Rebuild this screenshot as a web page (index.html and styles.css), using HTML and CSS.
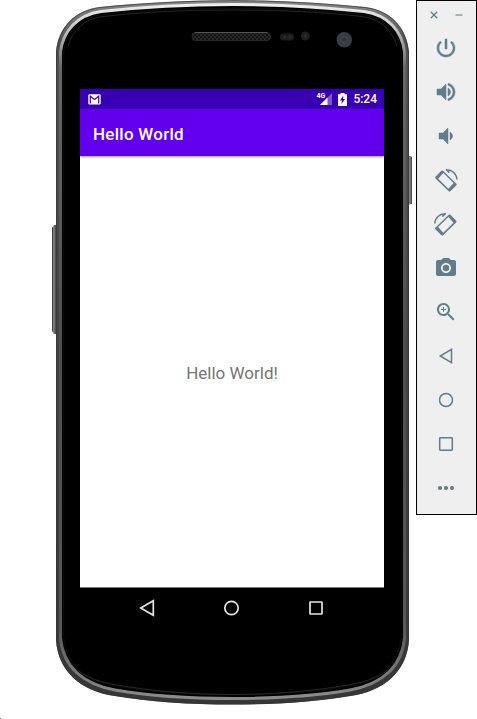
FILE: index.html
```
<!DOCTYPE html>
<html lang="en">
<head>
<meta charset="utf-8">
<title>Emulator</title>
<link rel="stylesheet" href="styles.css">
</head>
<body>
<main class="emulator">
  <section class="device">
    <svg class="frame" width="363" height="706" viewBox="51 0 363 706">
      <defs>
        <linearGradient id="rim" x1="0" y1="0" x2="0" y2="1">
          <stop offset="0" stop-color="#888"/><stop offset=".06" stop-color="#505050"/><stop offset="1" stop-color="#363636"/>
        </linearGradient>
        <linearGradient id="shine" x1="0" y1="0" x2="0" y2="1">
          <stop offset="0" stop-color="#eee"/><stop offset=".03" stop-color="#ccc"/><stop offset=".09" stop-color="#686868"/><stop offset=".5" stop-color="#4e4e4e"/><stop offset=".9" stop-color="#585858"/><stop offset="1" stop-color="#8c8c8c"/>
        </linearGradient>
        <linearGradient id="key"><stop offset="0" stop-color="#222"/><stop offset=".4" stop-color="#888"/><stop offset="1" stop-color="#444"/></linearGradient>
        <pattern id="mesh" width="4" height="4" patternUnits="userSpaceOnUse"><rect width="4" height="4" fill="#2a2a2a"/><circle cx="1" cy="1" r="1" fill="#0a0a0a"/><circle cx="3" cy="3" r="1" fill="#0a0a0a"/></pattern>
      </defs>
      <path d="M56 225h-2l-2 3v103l2 3h2z" fill="url(#key)"/>
      <path d="M408 156h2l2 1v47h-2l-2 2z" fill="url(#key)"/>
      <path d="M56 52C58 28 74 10 100 7C140 3 185 .2 232.500 .2S325 3 365 7C391 10 407 28 409 52V640C407 670 386 691 350 696C315 702 276 704.500 232.500 704.500S150 702 115 696C79 691 58 670 56 640Z" fill="url(#rim)"/>
      <path d="M56.500 53C58.500 28 74 11 100 7.500C140 3.500 185 .7 232.500 .7S325 3.500 365 7.500C391 11 406.500 28 408.500 53V640C406.500 670 386 690.500 350 695.500C315 701.500 276 704 232.500 704S150 701.500 115 695.500C79 690.500 58.500 670 56.500 640Z" fill="none" stroke="#333" stroke-width=".7"/>
      <path d="M60.500 52C63 31 77 15 101 11.500C142 7 185 4.500 232.500 4.500S323 7 364 11.500C388 15 402 31 404.500 52V638C402 666 383 684 350 690C315 696 276 698.500 232.500 698.500S150 696 115 690C82 684 63 666 60.500 638Z" fill="#000" stroke="url(#shine)" stroke-width="3"/>
      <path d="M63.500 54C65 34 79 18 102 14.500C142 10 185 8.500 232.500 8.500S323 10 363 14.500C386 18 400 34 401.500 54V636C399 663 381 680 349 686C314 692 276 694.500 232.500 694.500S151 692 116 686C84 680 66 663 63.500 636Z" fill="#000" stroke="#0a0a0a" stroke-width="1.500"/>
      <path d="M68 46C73 30 84 19 103 16.500C143 12 185 10 232.500 10S322 12 362 16.500C381 19 392 30 397 46" fill="none" stroke="#252525" stroke-width="1"/>
      <path d="M70 662C79 675 94 681 117 685C152 691 190 694.500 232.500 694.500S313 691 348 685C371 681 386 675 395 662" fill="none" stroke="#282828" stroke-width="1"/>
      <rect x="192" y="32.500" width="78.500" height="8" rx="3.500" fill="url(#mesh)" stroke="#292929"/>
      <path d="M195 32.500h72" stroke="#555"/>
      <rect x="280" y="33.500" width="14" height="7" rx="3.500" fill="#1e1e1e"/>
      <circle cx="284.500" cy="37" r="1.500" fill="#2b2b2b"/><circle cx="290" cy="37" r="1.500" fill="#2b2b2b"/>
      <circle cx="305.300" cy="36" r="4.500" fill="#1e1e1e"/><circle cx="305.300" cy="36" r="2" fill="#2b2828"/>
      <circle cx="344.300" cy="39.700" r="7.700" fill="#383c43"/><circle cx="344.300" cy="39.700" r="2.700" fill="#2b323d" stroke="#454c59"/>
    </svg>
    <div class="screen">
      <header class="status">
        <svg class="mail" width="13" height="11" viewBox="0 0 13 11"><rect x=".3" y=".3" width="12.400" height="10.200" rx="1.200" fill="#fff"/><path d="M2.300 9.500V2.300L6.500 5.500L10.700 2.300V9.500" fill="none" stroke="#3700b3" stroke-width="1.200"/></svg>
        <span class="network">4G</span>
        <svg class="signal" width="12" height="12" viewBox="0 0 12 12"><path d="M12 0V12H0Z" fill="#7d58cd"/><path d="M7.500 4.500V12H0Z" fill="#fff"/></svg>
        <svg class="battery" width="9" height="13" viewBox="0 0 9 13"><path d="M2.500 0h4v1.200H9V13H0V1.200h2.500z" fill="#fff"/><path d="M5.300 2.500L2 7.500h2L3.500 11L7 6H5z" fill="#3700b3"/></svg>
        <time class="clock">5:24</time>
      </header>
      <h1 class="title">Hello World</h1>
      <div class="content">Hello World!</div>
      <nav class="nav">
        <svg width="18" height="18" viewBox="0 0 18 18"><path d="M15.300 1.800V16.200L2.800 9Z"/></svg>
        <svg width="18" height="18" viewBox="0 0 18 18"><circle cx="8.500" cy="9" r="6.700"/></svg>
        <svg width="18" height="18" viewBox="0 0 18 18"><rect x="3" y="3" width="12" height="12" rx=".5"/></svg>
      </nav>
    </div>
  </section>
  <aside class="panel">
    <div class="window-buttons">
      <svg width="8" height="8" viewBox="0 0 8 8"><path d="M.8 .8L7.200 7.200M7.200 .8L.8 7.200"/></svg>
      <svg width="8" height="8" viewBox="0 0 8 8"><path class="minimize" d="M.5 4H7.500"/></svg>
    </div>
    <div class="tools">
      <svg class="bold" viewBox="0 0 24 24"><path d="M13 3h-2v10h2V3zm4.830 2.170l-1.420 1.420C17.990 7.860 19 9.810 19 12c0 3.870-3.130 7-7 7s-7-3.130-7-7c0-2.190 1.010-4.140 2.580-5.420L6.170 5.170C4.230 6.820 3 9.260 3 12c0 4.970 4.030 9 9 9s9-4.030 9-9c0-2.740-1.230-5.180-3.170-6.830z"/></svg>
      <svg class="bold" viewBox="0 0 24 24"><path d="M3 9v6h4l5 5V4L7 9H3zm13.500 3c0-1.770-1.020-3.290-2.500-4.030v8.050c1.480-.73 2.500-2.250 2.500-4.020zM14 3.230v2.060c2.890.86 5 3.540 5 6.710s-2.110 5.850-5 6.710v2.060c4.010-.91 7-4.490 7-8.770s-2.990-7.860-7-8.770z"/></svg>
      <svg class="bold" viewBox="0 0 24 24"><path d="M18.500 12c0-1.770-1.020-3.290-2.500-4.030v8.050c1.480-.73 2.500-2.250 2.500-4.020zM5 9v6h4l5 5V4L9 9H5z"/></svg>
      <svg viewBox="0 0 24 24"><g id="rotate"><path fill-rule="evenodd" d="M7.300 2.800Q8.200 2 9.100 2.800L22.400 15.700Q23.200 16.500 22.400 17.300L16.300 23.300Q15.500 24 14.700 23.300L1.500 10.400Q.8 9.600 1.500 8.800ZM9.300 5L4.200 10.700L14.400 20.800L19.600 15.100Z"/><path class="line" d="M12 2.200C17.500 1.200 22.500 5.500 23 11.500M12 1.300L15.300 4.600"/></g></svg>
      <svg viewBox="0 0 24 24"><use href="#rotate" transform="matrix(-1 0 0 1 23.700 0)"/></svg>
      <svg viewBox="0 0 24 24"><path fill-rule="evenodd" d="M9 2L7.170 4H4c-1.100 0-2 .9-2 2v12c0 1.100.9 2 2 2h16c1.100 0 2-.9 2-2V6c0-1.100-.9-2-2-2h-3.170L15 2H9zm3 15c-2.760 0-5-2.240-5-5s2.240-5 5-5 5 2.240 5 5-2.240 5-5 5z"/><circle cx="12" cy="12" r="3.200"/></svg>
      <svg viewBox="0 0 24 24"><path d="M15.500 14h-.79l-.28-.27C15.410 12.590 16 11.110 16 9.500 16 5.910 13.090 3 9.500 3S3 5.910 3 9.500 5.910 16 9.500 16c1.610 0 3.090-.59 4.230-1.570l.27.28v.79l5 4.990L20.490 19l-4.990-5zm-6 0C7.010 14 5 11.990 5 9.500S7.010 5 9.500 5 14 7.010 14 9.500 11.990 14 9.500 14zM9 7v2H7v1h2v2h1v-2h2V9h-2V7z"/></svg>
      <svg viewBox="0 0 24 24"><path class="line" d="M17.500 5.300V18.700L6.300 12Z"/></svg>
      <svg viewBox="0 0 24 24"><circle class="line" cx="12" cy="12" r="6.500"/></svg>
      <svg viewBox="0 0 24 24"><rect class="line" x="5.700" y="5.700" width="12.600" height="12.600" rx=".7"/></svg>
      <svg viewBox="0 0 24 24"><circle cx="6" cy="12" r="2.100"/><circle cx="12" cy="12" r="2.100"/><circle cx="18" cy="12" r="2.100"/></svg>
    </div>
  </aside>
  <i class="speck"></i>
</main>
</body>
</html>
```
FILE: styles.css
```
* { box-sizing: border-box; }
body { margin: 0; background: #fff; font-family: Roboto, sans-serif; overflow: hidden; }
svg { display: block; }
.emulator { position: relative; display: flex; align-items: flex-start; width: 477px; height: 719px; padding-left: 51px; }
.device { position: relative; flex: none; width: 365px; height: 706px; padding: 89px 32px 0 29px; }
.frame { position: absolute; left: 0; top: 0; }
.screen { position: relative; width: 304px; height: 541px; display: flex; flex-direction: column; background: #fff; }
.status { height: 20px; display: flex; align-items: center; padding: 0 7px 0 8px; background: #3700b3; color: #fff; }
.network { margin: -7px 0 0 auto; font-size: 7px; line-height: 8px; font-weight: 700; }
.signal { margin-left: -5px; }
.battery { margin-left: 6px; }
.clock { margin-left: 6px; font-size: 12px; font-weight: 500; line-height: 20px; }
.title { position: relative; margin: 0; height: 47px; padding-left: 13px; background: #6200ee; color: #fff; font-size: 17px; font-weight: 500; line-height: 50px; letter-spacing: .27px; box-shadow: 0 1px 2px rgba(0,0,0,.4); }
.content { flex: 1; display: flex; align-items: center; justify-content: center; padding-top: 2px; color: #757575; font-size: 17px; }
.nav { height: 43px; display: flex; justify-content: space-between; padding: 11px 59px 0 58px; border-top: 1px solid #777; background: #000; }
.nav svg { fill: none; stroke: #e5e5e5; stroke-width: 1.7; }
.panel { width: 61px; height: 515px; flex: none; border: 1px solid #000; background: #efefef; }
.window-buttons { display: flex; gap: 17px; padding: 10px 0 0 13px; height: 35px; }
.window-buttons svg { fill: none; stroke: #607d8b; stroke-width: 1.3; }
.window-buttons .minimize { stroke: #90a4ae; stroke-width: 1.6; }
.tools { display: flex; flex-direction: column; align-items: flex-start; gap: 20px; padding-left: 17px; }
.tools svg { width: 24px; height: 24px; fill: #607d8b; overflow: visible; }
.tools .bold { stroke: #607d8b; stroke-width: .5; }
.tools .line { fill: none; stroke: #607d8b; stroke-width: 1.5; }
.speck { position: absolute; left: 0; bottom: 0; width: 1px; height: 1px; background: #777; }
```
